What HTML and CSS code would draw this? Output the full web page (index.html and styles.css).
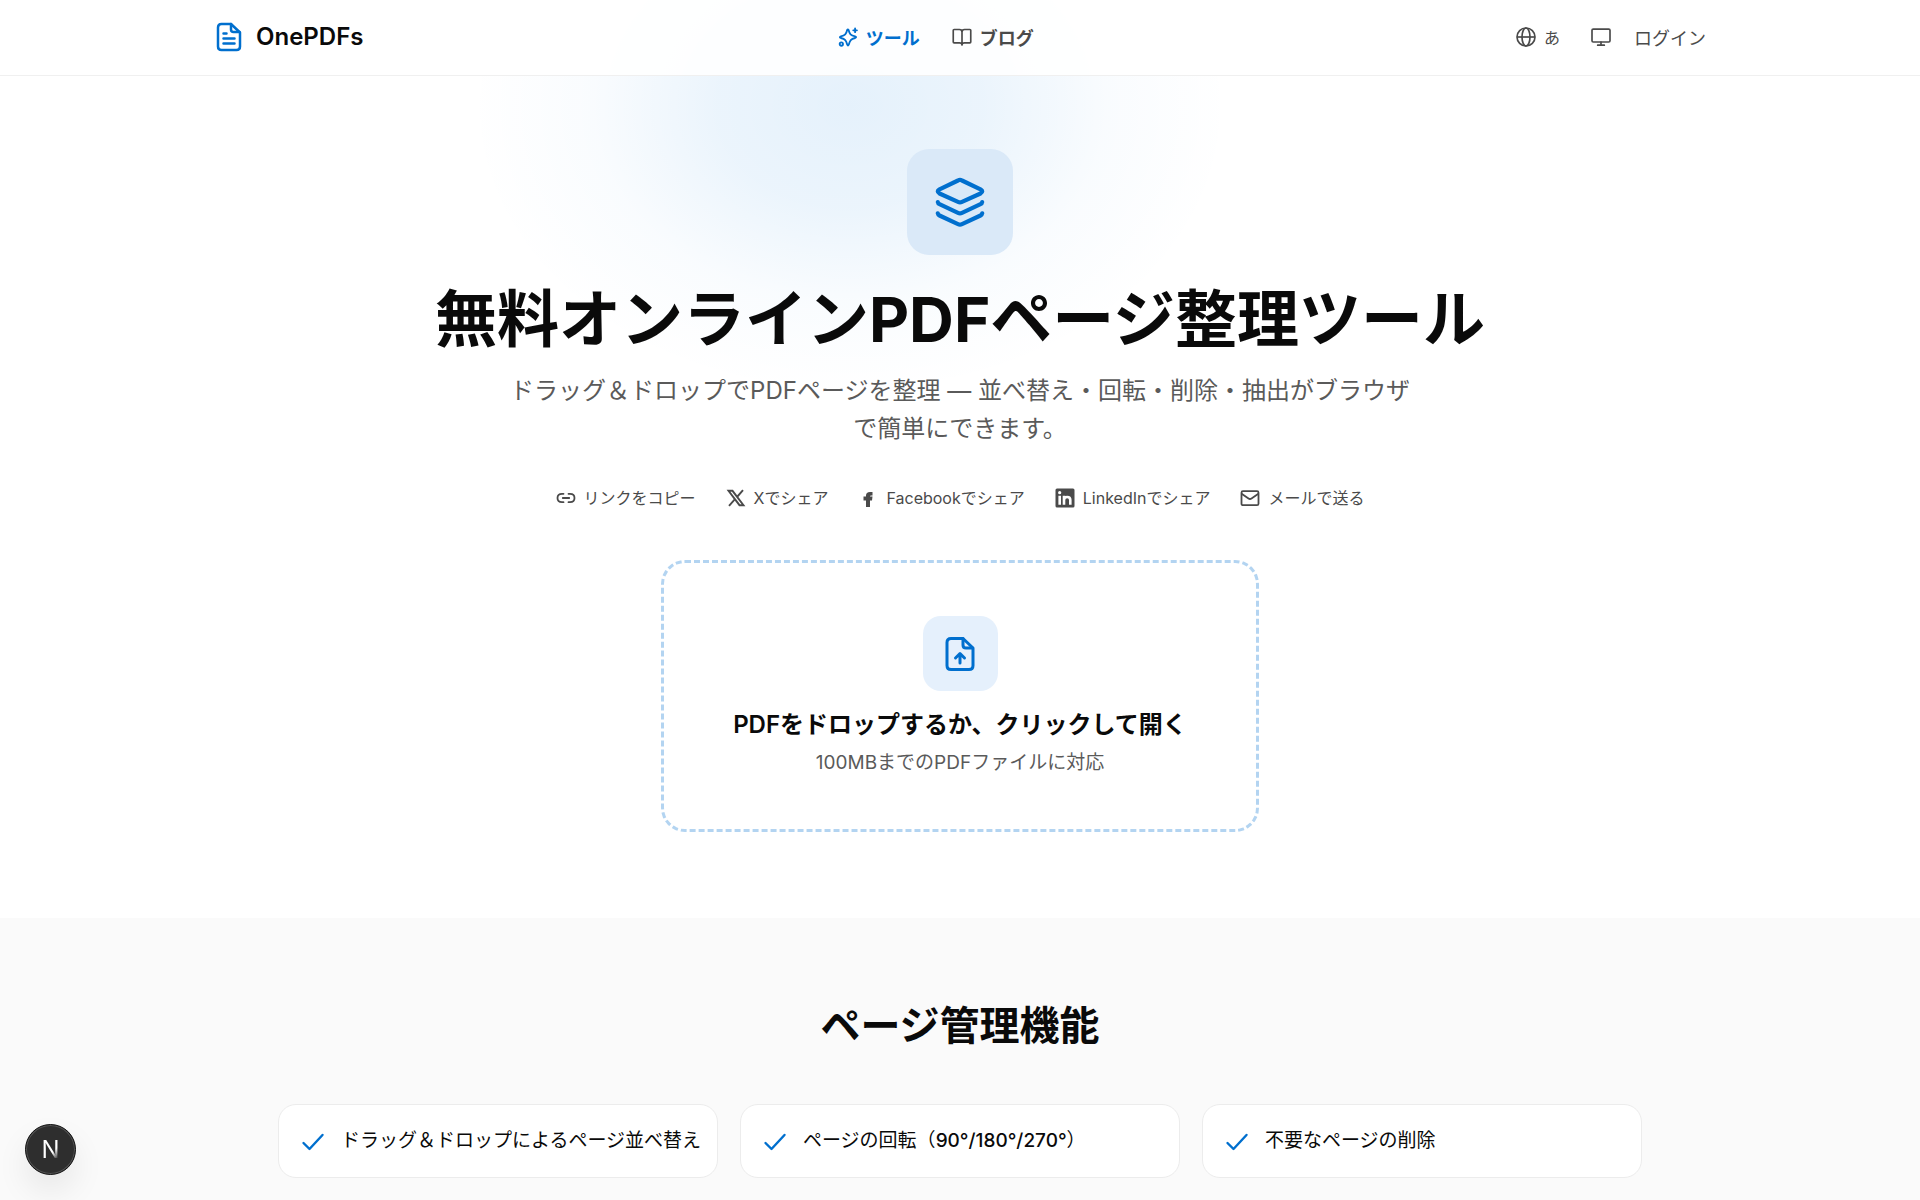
FILE: index.html
```
<!DOCTYPE html>
<html lang="ja">
<head>
    <meta charset="UTF-8">
    <meta name="viewport" content="width=device-width, initial-scale=1.0">
    <title>無料オンラインPDFページ整理ツール - OnePDFs</title>
    <link rel="stylesheet" href="styles.css">
</head>
<body>
    <header class="header">
        <div class="header-inner">
            <a class="logo" href="#">
                <svg class="logo-icon" viewBox="0 0 30 30" fill="none" stroke="currentColor" stroke-width="2.500" stroke-linecap="round" stroke-linejoin="round">
                    <path d="M17 2H7.500Q4 2 4 5.500V24.500Q4 28 7.500 28H22.500Q26 28 26 24.500V10.500Z"/>
                    <path d="M17 2V7.500Q17 10 19.500 10H25.500"/>
                    <path d="M9.500 11.500H12.500M9.500 16.500H20.500M9.500 21.500H20.500"/>
                </svg>
                OnePDFs
            </a>
            <nav class="nav">
                <a class="nav-link active" href="#">
                    <svg class="icon" viewBox="0 0 24 24" fill="none" stroke="currentColor" stroke-width="2.200" stroke-linecap="round" stroke-linejoin="round">
                        <path d="M11 3.500Q11.800 2 12.700 3.500C14 8.500 15 10 20.500 11.300Q23 12 20.500 13.200C15.500 14.400 14.300 16 13 21Q12 23.500 11 21C9.800 16 8.500 14.500 3.500 13.200Q1 12.200 3.500 11.300C8.500 10 9.800 8.500 11 3.500Z"/>
                        <path d="M20.500 1.800V6.200M18.300 4H22.700"/>
                        <circle cx="4" cy="20.500" r="2"/>
                    </svg>
                    ツール
                </a>
                <a class="nav-link" href="#">
                    <svg class="icon" viewBox="0 0 24 24" fill="none" stroke="currentColor" stroke-width="2" stroke-linecap="round" stroke-linejoin="round">
                        <path d="M12 6V21.500M12 6Q12 3 9 3H2.500Q1.500 3 1.500 4V18Q1.500 19 2.500 19H9Q12 19 12 21.500Q12 19 15 19H21.500Q22.500 19 22.500 18V4Q22.500 3 21.500 3H15Q12 3 12 6Z"/>
                    </svg>
                    ブログ
                </a>
            </nav>
            <div class="actions">
                <button class="action lang" type="button" aria-label="言語">
                    <svg class="icon" viewBox="0 0 24 24" fill="none" stroke="currentColor" stroke-width="2">
                        <circle cx="12" cy="12" r="10.800"/>
                        <ellipse cx="12" cy="12" rx="4.800" ry="10.800"/>
                        <path d="M1.200 12H22.800"/>
                    </svg>
                    あ
                </button>
                <button class="action" type="button" aria-label="テーマ">
                    <svg class="icon" viewBox="0 0 24 24" fill="none" stroke="currentColor" stroke-width="2" stroke-linecap="round" stroke-linejoin="round">
                        <rect x="1.200" y="2.500" width="21.600" height="15.500" rx="1.500"/>
                        <path d="M12 18V21.500M8 21.800H16"/>
                    </svg>
                </button>
                <a class="action login" href="#">ログイン</a>
            </div>
        </div>
    </header>

    <main>
        <section class="hero">
            <div class="glow"></div>
            <div class="hero-icon">
                <svg viewBox="0 0 50 50" fill="none" stroke="currentColor" stroke-width="4.200" stroke-linecap="round" stroke-linejoin="round">
                    <path d="M23 3.500Q25 2.300 27 3.500L45.500 12.300Q49 14.300 45.500 16.500L27 24.800Q25 25.800 23 24.800L4.500 16.500Q1 14.300 4.500 12.300Z"/>
                    <path d="M2.800 25Q3 26.500 4.500 27.200L23 35.800Q25 36.800 27 35.800L45.500 27.200Q47 26.500 47.200 25"/>
                    <path d="M2.800 36.300Q3 37.800 4.500 38.500L23 47.100Q25 48.100 27 47.100L45.500 38.500Q47 37.800 47.200 36.300"/>
                </svg>
            </div>
            <h1>無料オンラインPDFページ整理ツール</h1>
            <p class="lead">ドラッグ＆ドロップでPDFページを整理 — 並べ替え・回転・削除・抽出がブラウザで簡単にできます。</p>

            <div class="share">
                <button class="share-btn" type="button">
                    <svg class="icon" viewBox="0 0 20 20" fill="none" stroke="currentColor" stroke-width="1.800" stroke-linecap="round">
                        <path d="M7.500 5.800H6Q1.500 5.800 1.500 10T6 14.200H7.500M12.500 5.800H14Q18.500 5.800 18.500 10T14 14.200H12.500M6.800 10H13.200"/>
                    </svg>
                    リンクをコピー
                </button>
                <a class="share-btn" href="#">
                    <svg class="icon" viewBox="0 0 20 20" fill="none" stroke="currentColor" stroke-width="1.900">
                        <path d="M2.500 2.800H6.500L17.500 17.200H13.500ZM17 2.200L11 9M9 11.200L3 17.800"/>
                    </svg>
                    Xでシェア
                </a>
                <a class="share-btn" href="#">
                    <svg class="icon" viewBox="0 0 20 20" fill="currentColor">
                        <path d="M8 19V12.500H5.500V8.500H8V7.500Q8 4 12 4H14.500V7.500H13Q12 7.500 12 8.500H14.500L14 12.500H12V19Z"/>
                    </svg>
                    Facebookでシェア
                </a>
                <a class="share-btn" href="#">
                    <svg class="icon" viewBox="0 0 20 20">
                        <rect x="0.500" y="0.500" width="19" height="19" rx="1.500" fill="currentColor"/>
                        <g fill="none" stroke="#fff" stroke-width="2.600">
                            <path d="M4.700 7.800V16.800M9 7.800V16.800M9 12Q9 9 12.200 9Q15.300 9 15.300 12V16.800"/>
                        </g>
                        <circle cx="4.700" cy="4.700" r="1.600" fill="#fff"/>
                    </svg>
                    LinkedInでシェア
                </a>
                <a class="share-btn" href="#">
                    <svg class="icon" viewBox="0 0 20 20" fill="none" stroke="currentColor" stroke-width="1.800" stroke-linecap="round" stroke-linejoin="round">
                        <rect x="1.500" y="3.200" width="17" height="14" rx="1.500"/>
                        <path d="M2 6L8.500 10.500Q10 11.500 11.500 10.500L18 6"/>
                    </svg>
                    メールで送る
                </a>
            </div>

            <button class="dropzone" type="button">
                <span class="drop-icon">
                    <svg viewBox="0 0 36 36" fill="none" stroke="currentColor" stroke-width="3" stroke-linecap="round" stroke-linejoin="round">
                        <path d="M21 2.500H9Q5 2.500 5 6.500V29.500Q5 33.500 9 33.500H27Q31 33.500 31 29.500V12Z"/>
                        <path d="M21 2.500V9Q21 12 24 12H30.500"/>
                        <path d="M18 27V18M13.500 22L18 17.500L22.500 22"/>
                    </svg>
                </span>
                <span class="drop-title">PDFをドロップするか、クリックして開く</span>
                <span class="drop-note">100MBまでのPDFファイルに対応</span>
            </button>
        </section>

        <section class="features">
            <h2>ページ管理機能</h2>
            <ul class="feature-list">
                <li class="feature">
                    <svg class="check" viewBox="0 0 24 24" fill="none" stroke="currentColor" stroke-width="2.400" stroke-linecap="round" stroke-linejoin="round"><path d="M2.500 14L8.500 20L21.500 6"/></svg>
                    <span>ドラッグ＆ドロップによるページ並べ替え</span>
                </li>
                <li class="feature">
                    <svg class="check" viewBox="0 0 24 24" fill="none" stroke="currentColor" stroke-width="2.400" stroke-linecap="round" stroke-linejoin="round"><path d="M2.500 14L8.500 20L21.500 6"/></svg>
                    <span>ページの回転（<span class="degrees">90°/180°/270°</span>）</span>
                </li>
                <li class="feature">
                    <svg class="check" viewBox="0 0 24 24" fill="none" stroke="currentColor" stroke-width="2.400" stroke-linecap="round" stroke-linejoin="round"><path d="M2.500 14L8.500 20L21.500 6"/></svg>
                    <span>不要なページの削除</span>
                </li>
            </ul>
        </section>
    </main>

    <button class="dev-badge" type="button"><span>N</span></button>
</body>
</html>
```
FILE: styles.css
```
* {
    margin: 0;
    padding: 0;
    box-sizing: border-box;
}

body {
    font-family: Inter, 'Noto Sans CJK JP', sans-serif;
    background: #fff;
    color: #0a0a0a;
    min-height: 100vh;
}

a {
    color: inherit;
    text-decoration: none;
}

button {
    font: inherit;
    color: inherit;
    background: none;
    border: none;
    cursor: pointer;
}

.icon {
    width: 20px;
    height: 20px;
    flex-shrink: 0;
}

/* header */
.header {
    position: sticky;
    top: 0;
    z-index: 10;
    background: rgba(255, 255, 255, 0.88);
    border-bottom: 1px solid #f0f0f0;
}

.header-inner {
    max-width: 1540px;
    height: 75px;
    margin: 0 auto;
    padding: 0 24px 2px;
    display: flex;
    align-items: center;
    justify-content: space-between;
}

.logo {
    display: flex;
    align-items: center;
    gap: 12px;
    font-size: 24px;
    font-weight: 600;
}

.logo-icon {
    width: 30px;
    height: 30px;
    color: #006fce;
}

.nav,
.actions {
    display: flex;
    align-items: center;
}

.nav {
    gap: 32px;
    padding-right: 8px;
}

.nav-link {
    display: flex;
    align-items: center;
    gap: 8px;
    font-size: 18px;
    font-weight: 600;
    color: #4a4a4a;
}

.nav-link.active {
    color: #006fce;
}

.actions {
    gap: 31px;
}

.action {
    display: flex;
    align-items: center;
    gap: 8px;
    font-size: 18px;
    color: #4a4a4a;
}

.lang {
    font-size: 16px;
}

.login {
    margin-left: -8px;
}

/* hero */
.hero {
    position: relative;
    padding: 73px 24px 86px;
    display: flex;
    flex-direction: column;
    align-items: center;
    text-align: center;
}

.glow {
    position: absolute;
    top: -260px;
    left: 50%;
    width: 760px;
    height: 580px;
    margin-left: -490px;
    background: radial-gradient(closest-side, rgba(0, 120, 220, 0.1) 0%, rgba(0, 120, 220, 0.08) 35%, rgba(0, 120, 220, 0.025) 68%, rgba(0, 120, 220, 0) 100%);
    pointer-events: none;
}

.hero-icon {
    position: relative;
    display: flex;
    align-items: center;
    justify-content: center;
    width: 106px;
    height: 106px;
    border-radius: 22px;
    background: #dae9f8;
    color: #006fce;
}

.hero-icon svg {
    width: 50px;
    height: 50px;
}

h1 {
    position: relative;
    margin-top: 26px;
    font-size: 62px;
    font-weight: 700;
    line-height: 78px;
}

.lead {
    position: relative;
    max-width: 912px;
    margin-top: 13px;
    font-size: 24px;
    font-weight: 400;
    line-height: 38px;
    color: #5a5a5a;
}

.share {
    display: flex;
    flex-wrap: wrap;
    justify-content: center;
    gap: 30px;
    margin-top: 38px;
}

.share-btn {
    display: flex;
    align-items: center;
    gap: 8px;
    font-size: 16px;
    font-weight: 400;
    line-height: 24px;
    color: #4a4a4a;
}

.dropzone {
    display: flex;
    flex-direction: column;
    align-items: center;
    width: 100%;
    max-width: 598px;
    margin-top: 50px;
    padding: 53px 24px;
    border: 3px dashed #b3d4f1;
    border-radius: 24px;
}

.drop-icon {
    display: flex;
    align-items: center;
    justify-content: center;
    width: 75px;
    height: 75px;
    border-radius: 18px;
    background: #e5f0fc;
    color: #006fce;
}

.drop-icon svg {
    width: 36px;
    height: 36px;
}

.drop-title {
    margin-top: 16px;
    font-size: 24px;
    font-weight: 600;
    line-height: 36px;
}

.drop-note {
    margin-top: 6px;
    font-size: 19px;
    font-weight: 400;
    line-height: 27px;
    color: #5a5a5a;
}

/* features */
.features {
    background: #fafafa;
    padding: 78px 24px 100px;
}

h2 {
    text-align: center;
    font-size: 40px;
    font-weight: 700;
    line-height: 60px;
}

.feature-list {
    display: grid;
    grid-template-columns: repeat(3, 1fr);
    gap: 22px;
    max-width: 1364px;
    margin: 48px auto 0;
    list-style: none;
}

.feature {
    display: flex;
    align-items: center;
    gap: 16px;
    padding: 22px 12px 22px 22px;
    background: #fff;
    border: 1px solid #ececec;
    border-radius: 18px;
    font-size: 19px;
    font-weight: 400;
    line-height: 28px;
}

.degrees {
    font-weight: 500;
}

.check {
    width: 24px;
    height: 24px;
    flex-shrink: 0;
    color: #006fce;
}

.dev-badge {
    position: fixed;
    left: 25px;
    bottom: 25px;
    z-index: 20;
    width: 51px;
    height: 51px;
    border: 1px solid #111;
    border-radius: 50%;
    background: #2e2e2e;
    box-shadow: inset 0 0 0 1px #555, 0 16px 32px rgba(0, 0, 0, 0.08);
    font-size: 24px;
    line-height: 48px;
}

.dev-badge span {
    background: linear-gradient(135deg, #fff 60%, #555 80%);
    background-clip: text;
    -webkit-background-clip: text;
    color: transparent;
}
```
